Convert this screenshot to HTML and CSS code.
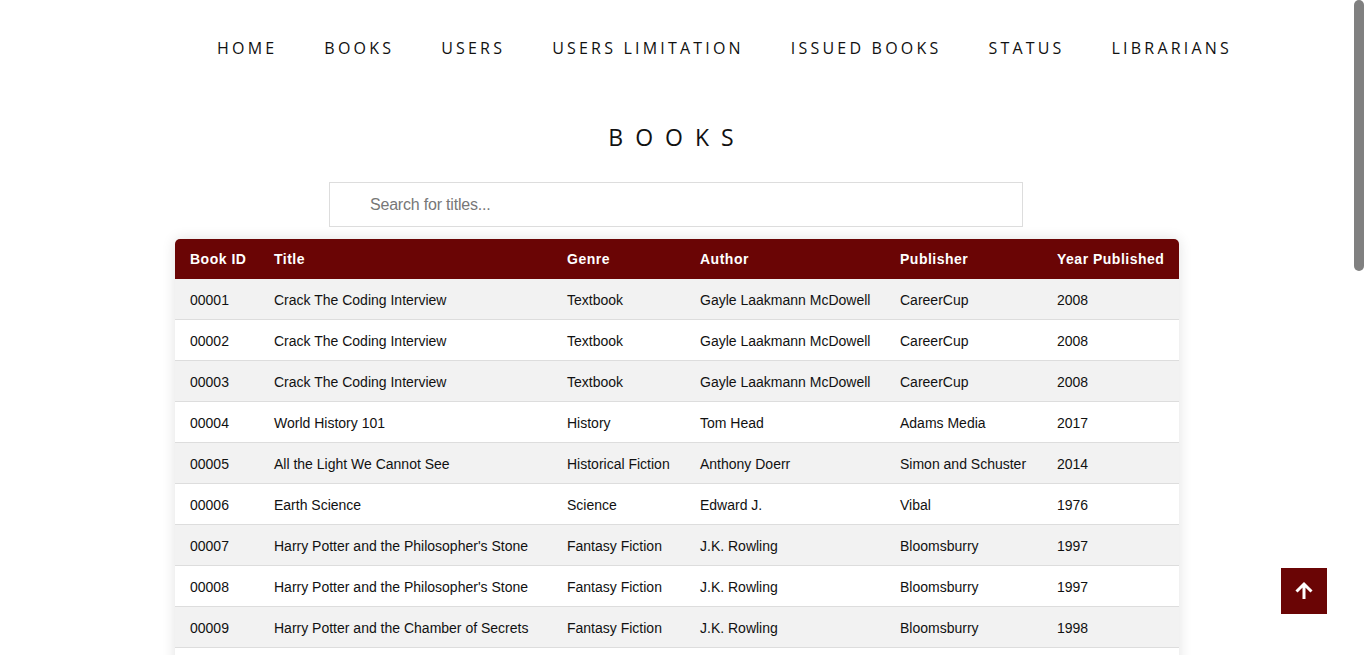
FILE: index.html
```html
<!DOCTYPE html>
<html>
<head>
<meta charset="utf-8">
<title>Books</title>
<link rel="stylesheet" href="styles.css">
</head>
<body>
<header class="topbar">
  <nav class="nav">
    <a href="#">HOME</a>
    <a href="#">BOOKS</a>
    <a href="#">USERS</a>
    <a href="#">USERS LIMITATION</a>
    <a href="#">ISSUED BOOKS</a>
    <a href="#">STATUS</a>
    <a href="#">LIBRARIANS</a>
  </nav>
</header>
<main class="content">
  <h1 class="page-title">BOOKS</h1>
  <input class="search" type="text" placeholder="Search for titles...">
  <div class="table-wrap">
    <table class="books">
      <colgroup>
        <col class="c1"><col class="c2"><col class="c3"><col class="c4"><col class="c5"><col class="c6">
      </colgroup>
      <thead>
        <tr><th>Book ID</th><th>Title</th><th>Genre</th><th>Author</th><th>Publisher</th><th>Year Published</th></tr>
      </thead>
      <tbody>
        <tr><td>00001</td><td>Crack The Coding Interview</td><td>Textbook</td><td>Gayle Laakmann McDowell</td><td>CareerCup</td><td>2008</td></tr>
        <tr><td>00002</td><td>Crack The Coding Interview</td><td>Textbook</td><td>Gayle Laakmann McDowell</td><td>CareerCup</td><td>2008</td></tr>
        <tr><td>00003</td><td>Crack The Coding Interview</td><td>Textbook</td><td>Gayle Laakmann McDowell</td><td>CareerCup</td><td>2008</td></tr>
        <tr><td>00004</td><td>World History 101</td><td>History</td><td>Tom Head</td><td>Adams Media</td><td>2017</td></tr>
        <tr><td>00005</td><td>All the Light We Cannot See</td><td>Historical Fiction</td><td>Anthony Doerr</td><td>Simon and Schuster</td><td>2014</td></tr>
        <tr><td>00006</td><td>Earth Science</td><td>Science</td><td>Edward J.</td><td>Vibal</td><td>1976</td></tr>
        <tr><td>00007</td><td>Harry Potter and the Philosopher's Stone</td><td>Fantasy Fiction</td><td>J.K. Rowling</td><td>Bloomsburry</td><td>1997</td></tr>
        <tr><td>00008</td><td>Harry Potter and the Philosopher's Stone</td><td>Fantasy Fiction</td><td>J.K. Rowling</td><td>Bloomsburry</td><td>1997</td></tr>
        <tr><td>00009</td><td>Harry Potter and the Chamber of Secrets</td><td>Fantasy Fiction</td><td>J.K. Rowling</td><td>Bloomsburry</td><td>1998</td></tr>
        <tr><td>00010</td><td>Harry Potter and the Chamber of Secrets</td><td>Fantasy Fiction</td><td>J.K. Rowling</td><td>Bloomsburry</td><td>1998</td></tr>
        <tr><td>00011</td><td>Harry Potter and the Prisoner of Azkaban</td><td>Fantasy Fiction</td><td>J.K. Rowling</td><td>Bloomsburry</td><td>1999</td></tr>
        <tr><td>00012</td><td>Harry Potter and the Prisoner of Azkaban</td><td>Fantasy Fiction</td><td>J.K. Rowling</td><td>Bloomsburry</td><td>1999</td></tr>
        <tr><td>00013</td><td>Harry Potter and the Goblet of Fire</td><td>Fantasy Fiction</td><td>J.K. Rowling</td><td>Bloomsburry</td><td>2000</td></tr>
        <tr><td>00014</td><td>Harry Potter and the Goblet of Fire</td><td>Fantasy Fiction</td><td>J.K. Rowling</td><td>Bloomsburry</td><td>2000</td></tr>
        <tr><td>00015</td><td>Harry Potter and the Order of the Phoenix</td><td>Fantasy Fiction</td><td>J.K. Rowling</td><td>Bloomsburry</td><td>2003</td></tr>
        <tr><td>00016</td><td>Harry Potter and the Half-Blood Prince</td><td>Fantasy Fiction</td><td>J.K. Rowling</td><td>Bloomsburry</td><td>2005</td></tr>
        <tr><td>00017</td><td>Harry Potter and the Deathly Hallows</td><td>Fantasy Fiction</td><td>J.K. Rowling</td><td>Bloomsburry</td><td>2007</td></tr>
        <tr><td>00018</td><td>The Hobbit</td><td>Fantasy Fiction</td><td>J.R.R. Tolkien</td><td>Allen &amp; Unwin</td><td>1937</td></tr>
        <tr><td>00019</td><td>To Kill a Mockingbird</td><td>Fiction</td><td>Harper Lee</td><td>J. B. Lippincott</td><td>1960</td></tr>
        <tr><td>00020</td><td>The Great Gatsby</td><td>Fiction</td><td>F. Scott Fitzgerald</td><td>Scribner</td><td>1925</td></tr>
        <tr><td>00021</td><td>A Brief History of Time</td><td>Science</td><td>Stephen Hawking</td><td>Bantam Books</td><td>1988</td></tr>
        <tr><td>00022</td><td>Introduction to Algorithms</td><td>Textbook</td><td>Thomas H. Cormen</td><td>MIT Press</td><td>2009</td></tr>
        <tr><td>00023</td><td>Clean Code</td><td>Textbook</td><td>Robert C. Martin</td><td>Prentice Hall</td><td>2008</td></tr>
        <tr><td>00024</td><td>Sapiens</td><td>History</td><td>Yuval Noah Harari</td><td>Harper</td><td>2011</td></tr>
        <tr><td>00025</td><td>Cosmos</td><td>Science</td><td>Carl Sagan</td><td>Random House</td><td>1980</td></tr>
        <tr><td>00026</td><td>1984</td><td>Fiction</td><td>George Orwell</td><td>Secker &amp; Warburg</td><td>1949</td></tr>
      </tbody>
    </table>
  </div>
</main>
<a class="to-top" href="#" aria-label="Back to top">
  <svg width="22" height="22" viewBox="0 0 22 22"><path d="M11 19V4M3.5 11.5L11 4l7.5 7.5" fill="none" stroke="#fff" stroke-width="3" stroke-linecap="butt"/></svg>
</a>
<div class="scroll-thumb"></div>
</body>
</html>
```

FILE: styles.css
```css
html { background: #fff; }
body {
  margin: 0;
  padding-right: 10px;
  font-family: "Liberation Sans", Arial, sans-serif;
  color: #111;
  background: #fff;
}
::-webkit-scrollbar { width: 0; }

.scroll-thumb {
  position: fixed;
  top: 0;
  right: 0;
  width: 10px;
  height: 271px;
  background: #808080;
  border-radius: 5px;
}
.topbar {
  height: 96px;
  display: flex;
  align-items: center;
  justify-content: flex-end;
  padding-right: 122px;
}
.nav {
  display: flex;
  gap: 47px;
}
.nav a {
  font-family: "Open Sans", sans-serif;
  font-size: 16px;
  letter-spacing: 3.2px;
  color: #111;
  text-decoration: none;
}
.content {
  display: flex;
  flex-direction: column;
  align-items: center;
  padding-bottom: 150px;
}
.page-title {
  margin: 17px 0 0;
  font-family: "Open Sans", sans-serif;
  font-weight: 400;
  font-size: 23px;
  letter-spacing: 12px;
  line-height: 48px;
  color: #111;
}
.search {
  box-sizing: border-box;
  width: 694px;
  height: 45px;
  margin-top: 21px;
  margin-right: 2px;
  border: 1px solid #ddd;
  padding: 0 0 0 40px;
  font-family: "Liberation Sans Narrow", "Liberation Sans", sans-serif;
  font-size: 16px;
  letter-spacing: -0.2px;
  color: #555;
  outline: none;
}
.search::placeholder { color: #777; }
.table-wrap {
  margin-top: 12px;
  width: 1004px;
  border-radius: 5px 5px 0 0;
  overflow: hidden;
  box-shadow: 0 0 14px rgba(0, 0, 0, 0.12);
}
.books {
  width: 100%;
  border-collapse: collapse;
  table-layout: fixed;
  font-size: 14px;
}
.c1 { width: 84px; }
.c2 { width: 293px; }
.c3 { width: 133px; }
.c4 { width: 200px; }
.c5 { width: 157px; }
.c6 { width: 137px; }
.books th {
  background: #6a0505;
  color: #fff;
  text-align: left;
  font-weight: 700;
  letter-spacing: 0.5px;
  height: 40px;
  padding: 0 0 0 15px;
  white-space: nowrap;
}
.books td {
  height: 38px;
  padding: 2px 0 0 15px;
  border-bottom: 1px solid #dddddd;
  white-space: nowrap;
  color: #111;
}
.books tbody tr:nth-child(odd) { background: #f2f2f2; }
.books tbody tr:nth-child(even) { background: #fff; }
.to-top {
  position: fixed;
  right: 37px;
  bottom: 41px;
  width: 46px;
  height: 46px;
  background: #6a0505;
  display: flex;
  align-items: center;
  justify-content: center;
}
```
